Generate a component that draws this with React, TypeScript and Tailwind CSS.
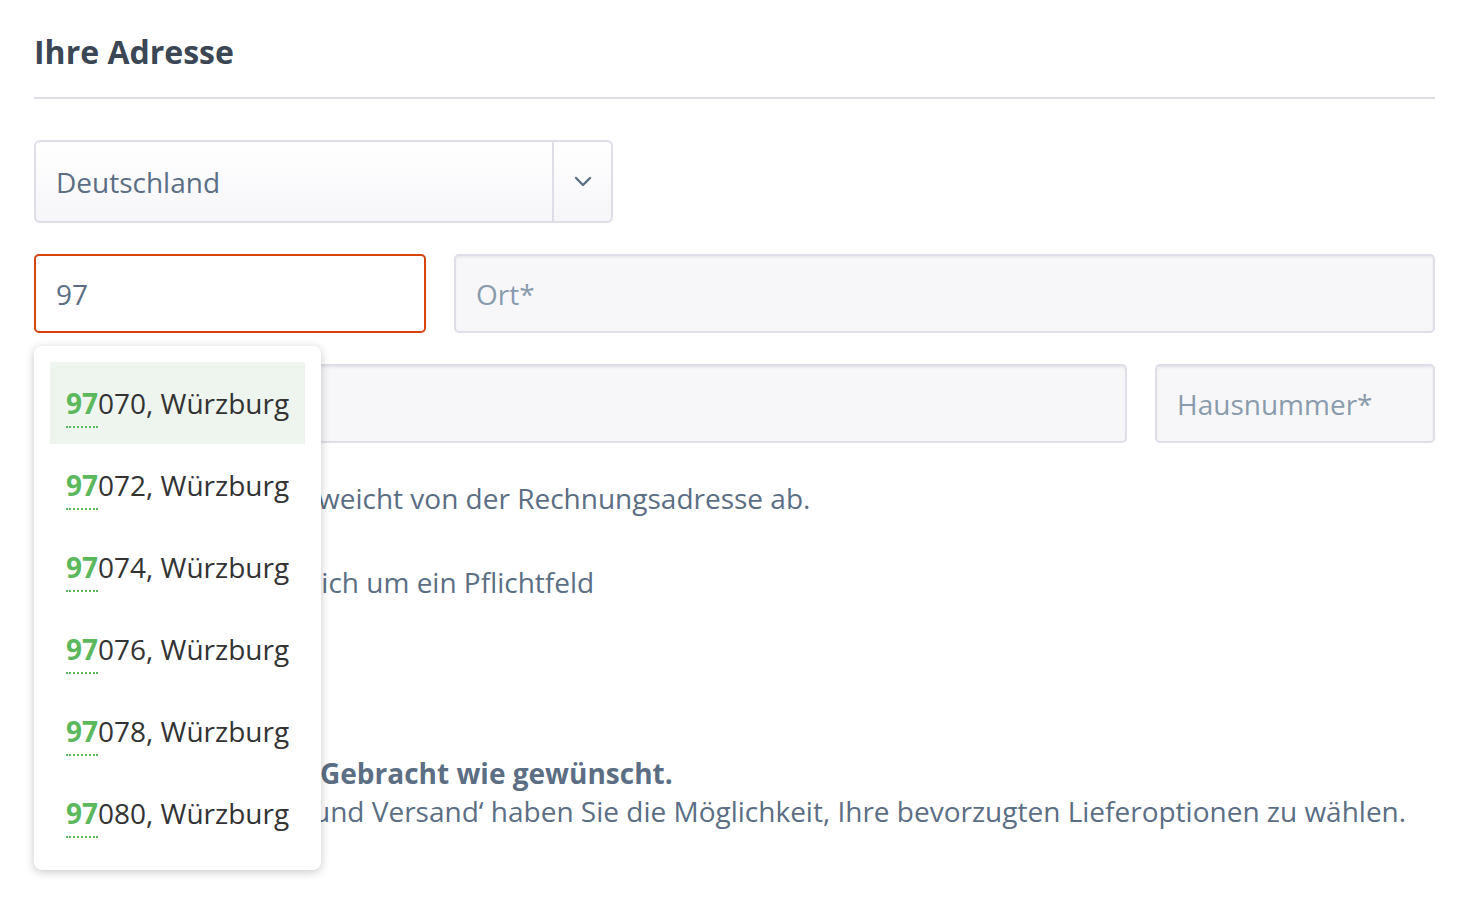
import React from "react";

const items = ["070", "072", "074", "076", "078", "080"];

export default function App() {
  return (
    <div
      className="relative min-h-[900px] w-[1462px] bg-white pl-[34px] pr-[27px] pt-[32px]"
      style={{ fontFamily: '"Open Sans", "Noto Sans", sans-serif' }}
    >
      <h2 className="text-[32px] font-bold leading-[40px] text-[#3b4754]">Ihre Adresse</h2>
      <div className="mt-[25px] h-0 border-b-2 border-[#dcdce6]" />

      <div className="mt-[41px] flex h-[83px] w-[579px] rounded-[6px] border-2 border-[#dedee8] bg-gradient-to-b from-white to-[#f6f6f9]">
        <div className="flex flex-1 items-center pl-[20px] text-[28px] text-[#5b6e84]">Deutschland</div>
        <div className="flex w-[59px] items-center justify-center border-l-2 border-[#dedee8]">
          <svg width="18" height="11" viewBox="0 0 18 11" fill="none">
            <path d="M2 2l7 7 7-7" stroke="#5b6e84" strokeWidth="2.4" strokeLinecap="round" strokeLinejoin="round" />
          </svg>
        </div>
      </div>

      <div className="mt-[31px] flex gap-[28px]">
        <div className="flex h-[79px] w-[392px] items-center rounded-[5px] border-2 border-[#d9430f] bg-white pl-[20px] text-[28px] text-[#5b6e84]">
          97
        </div>
        <div className="flex h-[79px] flex-1 items-center rounded-[5px] border-2 border-[#dedee8] bg-[#f7f7fa] pl-[20px] text-[28px] text-[#8a9bad] shadow-[inset_0_2px_2px_rgba(0,0,0,0.05)]">
          Ort*
        </div>
      </div>

      <div className="mt-[31px] flex gap-[28px]">
        <div className="flex h-[79px] flex-1 items-center rounded-[5px] border-2 border-[#dedee8] bg-[#f7f7fa] pl-[20px] text-[28px] text-[#8a9bad] shadow-[inset_0_2px_2px_rgba(0,0,0,0.05)]">
          Straße*
        </div>
        <div className="flex h-[79px] w-[280px] items-center rounded-[5px] border-2 border-[#dedee8] bg-[#f7f7fa] pl-[20px] text-[28px] text-[#8a9bad] shadow-[inset_0_2px_2px_rgba(0,0,0,0.05)]">
          Hausnummer*
        </div>
      </div>

      <div className="mt-[35px] flex items-center text-[28px] leading-[40px] text-[#5b6e84] whitespace-nowrap">
        <div className="flex w-[284px] shrink-0 items-center gap-[14px]">
          <div className="h-[26px] w-[26px] rounded-[4px] border-2 border-[#dedee8] bg-[#f7f7fa]" />
          <span>Die Lieferadresse</span>
        </div>
        <span>weicht von der Rechnungsadresse ab.</span>
      </div>
      <div className="mt-[44px] flex text-[28px] leading-[40px] text-[#5b6e84] whitespace-nowrap">
        <span className="inline-block w-[274px] shrink-0">* Hierbei handelt es</span>
        <span>sich um ein Pflichtfeld</span>
      </div>

      <div className="mt-[152px] flex text-[28px] font-bold leading-[38px] text-[#5b6e84] whitespace-nowrap">
        <span className="inline-block w-[286px] shrink-0">Ihre Lieferung:</span>
        <span>Gebracht wie gewünscht.</span>
      </div>
      <div className="flex text-[28px] leading-[38px] text-[#5b6e84] whitespace-nowrap">
        <span className="inline-block w-[279px] shrink-0">Im Schritt ‚Zahlung</span>
        <span>und Versand‘ haben Sie die Möglichkeit, Ihre bevorzugten Lieferoptionen zu wählen.</span>
      </div>

      <div className="absolute left-[34px] top-[346px] w-[287px] rounded-[8px] bg-white p-[16px] shadow-[0_2px_10px_rgba(0,0,0,0.22)]">
        {items.map((s, i) => (
          <div
            key={s}
            className={`flex h-[82px] items-center pl-[16px] text-[28px] text-[#333333] ${i === 0 ? "bg-[#edf5ee]" : ""}`}
          >
            <span className="leading-[40px] whitespace-nowrap">
              <span className="relative inline-block font-bold text-[#5cb85c]">
                97
                <span className="absolute left-0 right-0 top-[43px] h-0 border-b-2 border-dotted border-[#5cb85c]" />
              </span>
              {s}, Würzburg
            </span>
          </div>
        ))}
      </div>
    </div>
  );
}
